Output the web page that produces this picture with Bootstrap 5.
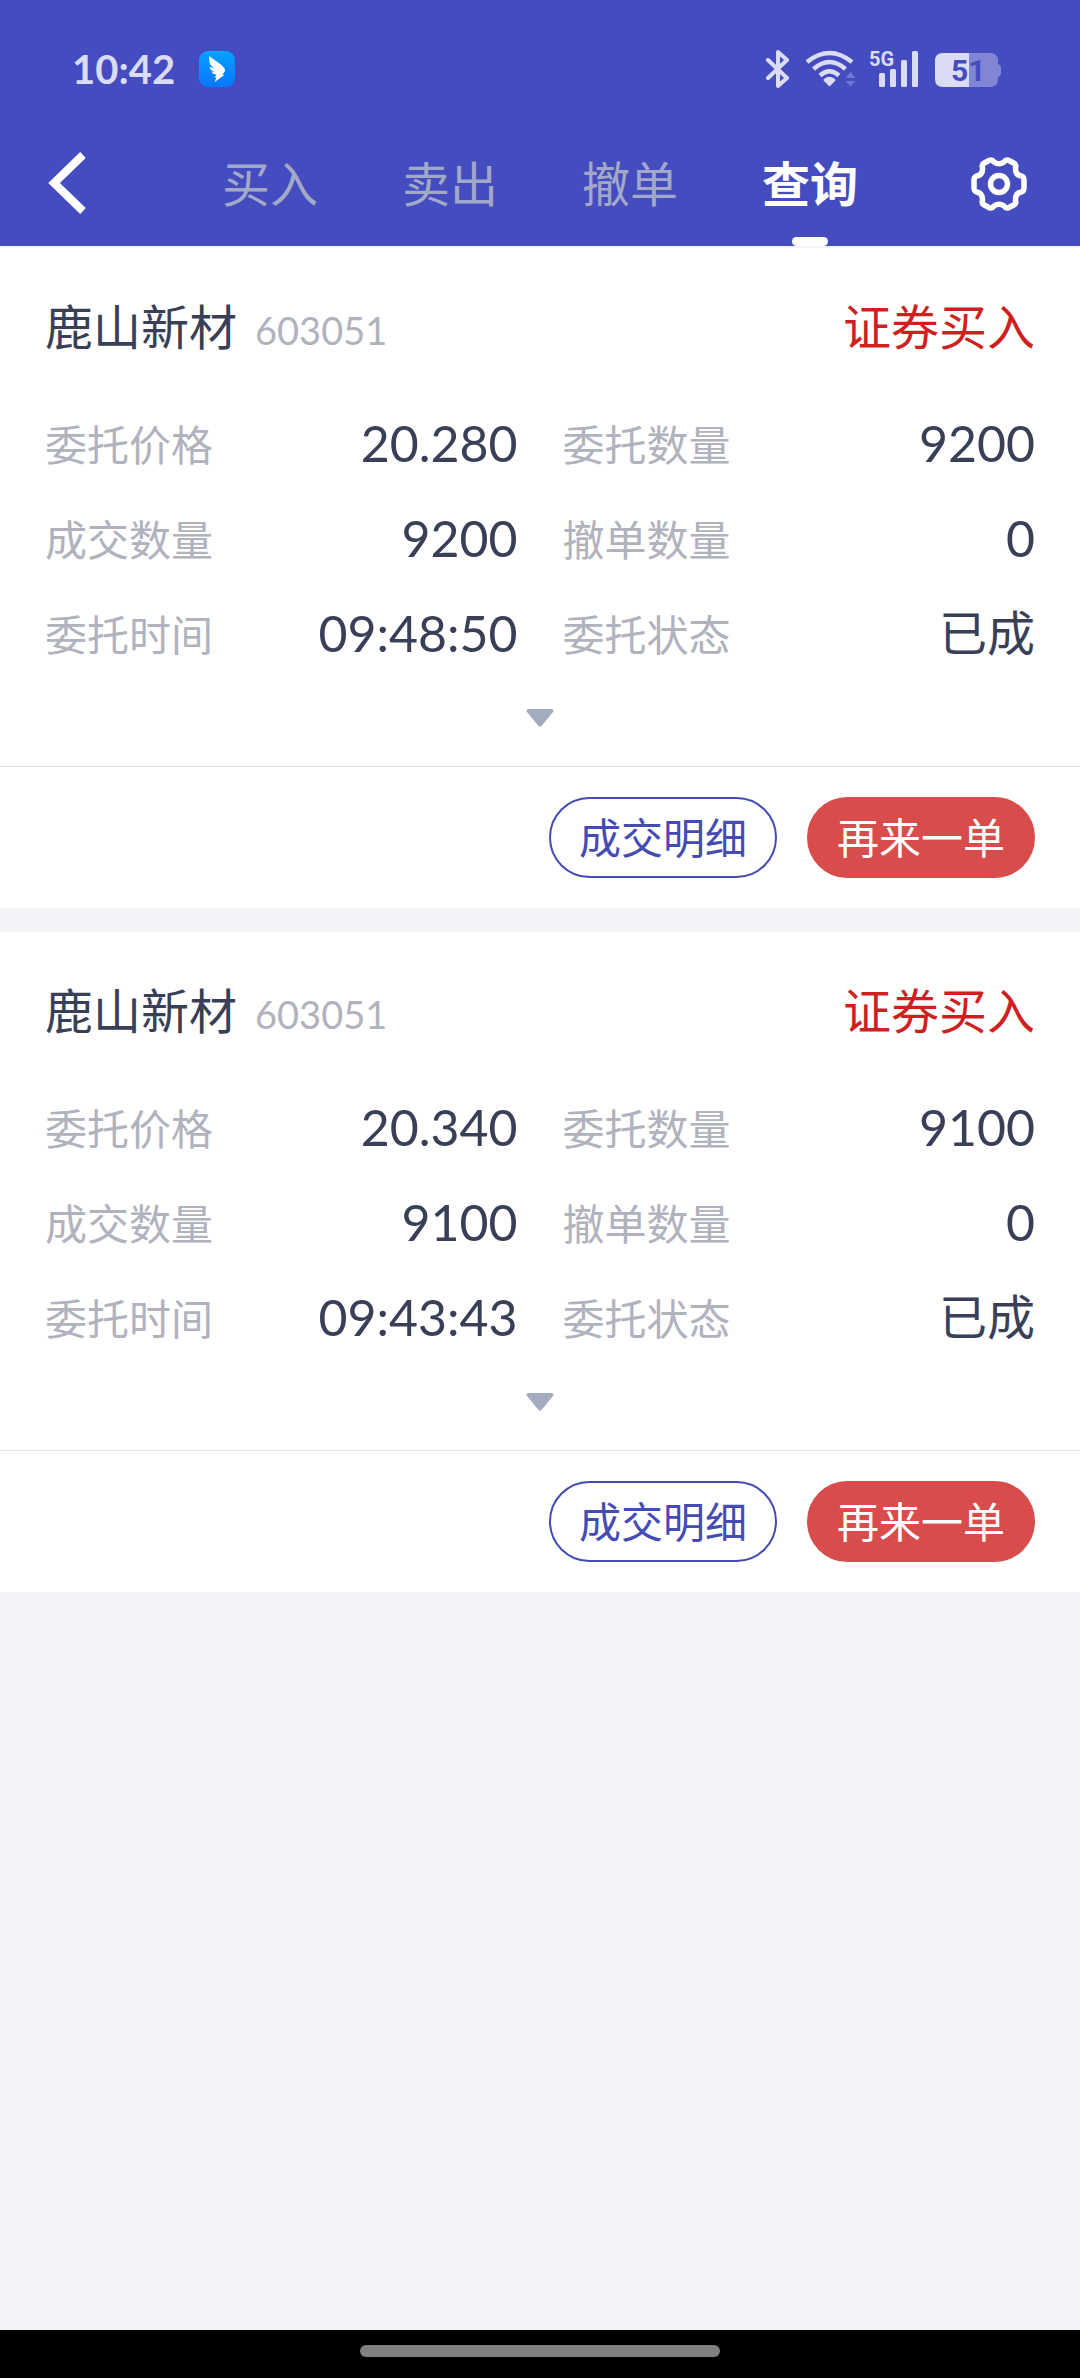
<!DOCTYPE html>
<html lang="zh-CN">
<head>
<meta charset="utf-8">
<meta name="viewport" content="width=device-width, initial-scale=1">
<title>查询</title>
<link href="https://cdn.jsdelivr.net/npm/bootstrap@5.3.0/dist/css/bootstrap.min.css" rel="stylesheet">
<style>
  body { background: #f3f4f7; color: #383f57; font-family: Lato, "Noto Sans CJK SC", sans-serif; font-size: 48px; line-height: 60px; }
  svg { display: block; }
  .app-head { background: #444cbf; }
  .status-bar { height: 140px; padding: 0 78px 2px 72px; color: #dadcf5; }
  .clock { font-size: 40px; font-weight: 700; line-height: 40px; }
  .tab-bar { height: 106px; }
  .side-btn { width: 180px; height: 88px; background: none; border: 0; }
  .side-back { padding: 0 0 0 48px; }
  .side-gear { padding: 0 52px 0 0; }
  .nav-pills .tab-link { display: block; position: relative; height: 106px; padding-top: 14px; color: #a2a9c8; text-align: center; text-decoration: none; }
  .nav-pills .tab-link.active { color: #fff; font-weight: 700; }
  .tab-link.active::after { content: ""; position: absolute; left: 50%; bottom: 0; width: 36px; height: 9px; margin-left: -18px; border-radius: 5px; background: #fff; }
  .orders { gap: 24px; padding-top: 2px; }
  .order { background: #fff; }
  .order-body { padding: 49px 45px 0; }
  .order-name { gap: 18px; }
  .code { color: #b0b2bd; font-size: 38px; }
  .side-buy { color: #cf1f1f; }
  .facts { --bs-gutter-x: 45px; margin-top: 53px; margin-bottom: 0; row-gap: 33px; }
  .facts dt { padding-top: 2px; color: #b0b2bd; font-size: 42px; font-weight: 400; }
  .facts dd { margin: 0; font-size: 50px; }
  .facts .cjk { font-size: 48px; }
  .more { display: block; padding: 44px 0 39px; background: none; border: 0; }
  .order-foot { border-top: 1px solid #e3e4e8; padding: 30px 45px; gap: 30px; }
  .act { height: 81px; padding: 0 28px; border-width: 2px; font-size: 42px; line-height: 60px; }
  .act-line { color: #444cb4; border-color: #444cb4; }
  .act-solid { color: #fff; background: #d84c4b; border-color: #d84c4b; }
  .home-bar { height: 48px; background: #000; padding-top: 15px; }
  .home-pill { width: 33.333%; height: 12px; background: #808080; }
</style>
<script src="https://cdn.jsdelivr.net/npm/bootstrap@5.3.0/dist/js/bootstrap.bundle.min.js"></script>
</head>
<body class="d-flex flex-column min-vh-100">
<header class="app-head">
  <div class="status-bar d-flex align-items-center justify-content-between">
    <div class="d-flex align-items-center gap-4">
      <span class="clock">10:42</span>
      <svg width="36" height="36" viewBox="0 0 36 36" aria-hidden="true">
        <defs><linearGradient id="sky" x1="0" y1="0" x2="0" y2="1"><stop offset="0" stop-color="#06a2ff"/><stop offset="1" stop-color="#0676ff"/></linearGradient></defs>
        <rect width="36" height="36" rx="9" fill="url(#sky)"/>
        <path fill="#fff" d="M10.500 5C14 9 22 12 25.500 17.500C27 20 24.500 22 23.500 24H25.500L15.500 31L17.500 26.500H15.500L17.500 23.500C14.500 23.500 13.500 22.500 12.500 20.500L16 20.700C12 19.500 11 18 10.500 15.700L15 17.200C11 14.500 9.500 10 10.500 5Z"/>
      </svg>
    </div>
    <svg width="236" height="56" viewBox="766 41 236 56" role="img" aria-label="蓝牙 WiFi 5G 电量 51">
      <g fill="none" stroke="#dadcf5" stroke-width="4" stroke-linejoin="round" stroke-linecap="round">
        <path d="M768 60L787 78L778 86V52L787 60L768 78"/>
        <path d="M807 62Q829.500 44 852 62M813.500 69Q829.500 55 845.500 69M820 75.500Q829.500 67 839 75.500" stroke-width="4.500" stroke-linecap="butt"/>
      </g>
      <path fill="#dadcf5" d="M824 79Q829.500 74.500 835 79Q836 80 835 81L829.500 86.500L824 81Q823 80 824 79Z"/>
      <path fill="#7178d2" d="M845.500 78L850.500 72L855.500 78ZM845.500 81H855.500L850.500 86.500Z"/>
      <g fill="#dadcf5"><rect x="879" y="73" width="6" height="14" rx="1.500"/><rect x="890" y="69" width="6" height="18" rx="1.500"/><rect x="901" y="60" width="6" height="27" rx="1.500"/><rect x="912" y="51" width="6" height="36" rx="1.500"/></g>
      <text x="869" y="66" fill="#dadcf5" font-family="Roboto, sans-serif" font-size="20" font-weight="700">5G</text>
      <path fill="#8186d4" d="M969 53H990Q998 53 998 61V64Q1001 65 1001 68V73Q1001 76 998 77V79Q998 87 990 87H969Z"/>
      <path fill="#dadcf5" d="M969 53H943Q935 53 935 61V79Q935 87 943 87H969Z"/>
      <text x="951" y="81" fill="#444cbf" font-family="Roboto, sans-serif" font-size="30" font-weight="700">51</text>
    </svg>
  </div>
  <nav class="tab-bar d-flex">
    <button class="side-btn side-back" type="button" aria-label="返回">
      <svg width="40" height="64" viewBox="0 0 40 64"><path d="M35 3L6 31L35 59" fill="none" stroke="#fff" stroke-width="8"/></svg>
    </button>
    <ul class="nav nav-pills nav-justified flex-grow-1 flex-nowrap">
      <li class="nav-item"><a class="tab-link" href="#">买入</a></li>
      <li class="nav-item"><a class="tab-link" href="#">卖出</a></li>
      <li class="nav-item"><a class="tab-link" href="#">撤单</a></li>
      <li class="nav-item"><a class="tab-link active" href="#" aria-current="page">查询</a></li>
    </ul>
    <button class="side-btn side-gear d-flex justify-content-end align-items-center" type="button" aria-label="设置">
      <svg width="58" height="56" viewBox="-29 -28 58 56" fill="none" stroke="#fff" stroke-width="5.500" stroke-linejoin="round">
        <circle r="8.500"/>
        <path d="M-10 -23.500Q-7 -25 -5 -22Q0 -18.500 5 -22Q7 -25 10 -23.500L15.500 -20.500Q17.500 -19 16.500 -16.500Q16 -9 22.500 -8Q25 -7 25 -4V4Q25 7 22.500 8Q16 9 16.500 16.500Q17.500 19 15.500 20.500L10 23.500Q7 25 5 22Q0 18.500 -5 22Q-7 25 -10 23.500L-15.500 20.500Q-17.500 19 -16.500 16.500Q-16 9 -22.500 8Q-25 7 -25 4V-4Q-25 -7 -22.500 -8Q-16 -9 -16.500 -16.500Q-17.500 -19 -15.500 -20.500Z"/>
      </svg>
    </button>
  </nav>
</header>
<main class="orders d-flex flex-column flex-grow-1">
  <article class="order">
    <div class="order-body">
      <div class="d-flex justify-content-between">
        <div class="order-name d-flex align-items-baseline"><span>鹿山新材</span><span class="code">603051</span></div>
        <span class="side-buy">证券买入</span>
      </div>
      <dl class="facts row row-cols-2">
        <div class="d-flex justify-content-between align-items-start"><dt>委托价格</dt><dd>20.280</dd></div>
        <div class="d-flex justify-content-between align-items-start"><dt>委托数量</dt><dd>9200</dd></div>
        <div class="d-flex justify-content-between align-items-start"><dt>成交数量</dt><dd>9200</dd></div>
        <div class="d-flex justify-content-between align-items-start"><dt>撤单数量</dt><dd>0</dd></div>
        <div class="d-flex justify-content-between align-items-start"><dt>委托时间</dt><dd>09:48:50</dd></div>
        <div class="d-flex justify-content-between align-items-start"><dt>委托状态</dt><dd class="cjk">已成</dd></div>
      </dl>
      <button class="more mx-auto" type="button" aria-label="展开"><svg width="28" height="18" viewBox="0 0 28 18"><path fill="#a3acbe" d="M2 0H26Q28.500 1 27 3L15.500 17Q14 18.500 12.500 17L1 3Q-.5 1 2 0Z"/></svg></button>
    </div>
    <div class="order-foot d-flex justify-content-end">
      <button class="btn rounded-pill act act-line" type="button">成交明细</button>
      <button class="btn rounded-pill act act-solid" type="button">再来一单</button>
    </div>
  </article>
  <article class="order">
    <div class="order-body">
      <div class="d-flex justify-content-between">
        <div class="order-name d-flex align-items-baseline"><span>鹿山新材</span><span class="code">603051</span></div>
        <span class="side-buy">证券买入</span>
      </div>
      <dl class="facts row row-cols-2">
        <div class="d-flex justify-content-between align-items-start"><dt>委托价格</dt><dd>20.340</dd></div>
        <div class="d-flex justify-content-between align-items-start"><dt>委托数量</dt><dd>9100</dd></div>
        <div class="d-flex justify-content-between align-items-start"><dt>成交数量</dt><dd>9100</dd></div>
        <div class="d-flex justify-content-between align-items-start"><dt>撤单数量</dt><dd>0</dd></div>
        <div class="d-flex justify-content-between align-items-start"><dt>委托时间</dt><dd>09:43:43</dd></div>
        <div class="d-flex justify-content-between align-items-start"><dt>委托状态</dt><dd class="cjk">已成</dd></div>
      </dl>
      <button class="more mx-auto" type="button" aria-label="展开"><svg width="28" height="18" viewBox="0 0 28 18"><path fill="#a3acbe" d="M2 0H26Q28.500 1 27 3L15.500 17Q14 18.500 12.500 17L1 3Q-.5 1 2 0Z"/></svg></button>
    </div>
    <div class="order-foot d-flex justify-content-end">
      <button class="btn rounded-pill act act-line" type="button">成交明细</button>
      <button class="btn rounded-pill act act-solid" type="button">再来一单</button>
    </div>
  </article>
</main>
<footer class="home-bar"><div class="home-pill rounded-pill mx-auto"></div></footer>
</body>
</html>
